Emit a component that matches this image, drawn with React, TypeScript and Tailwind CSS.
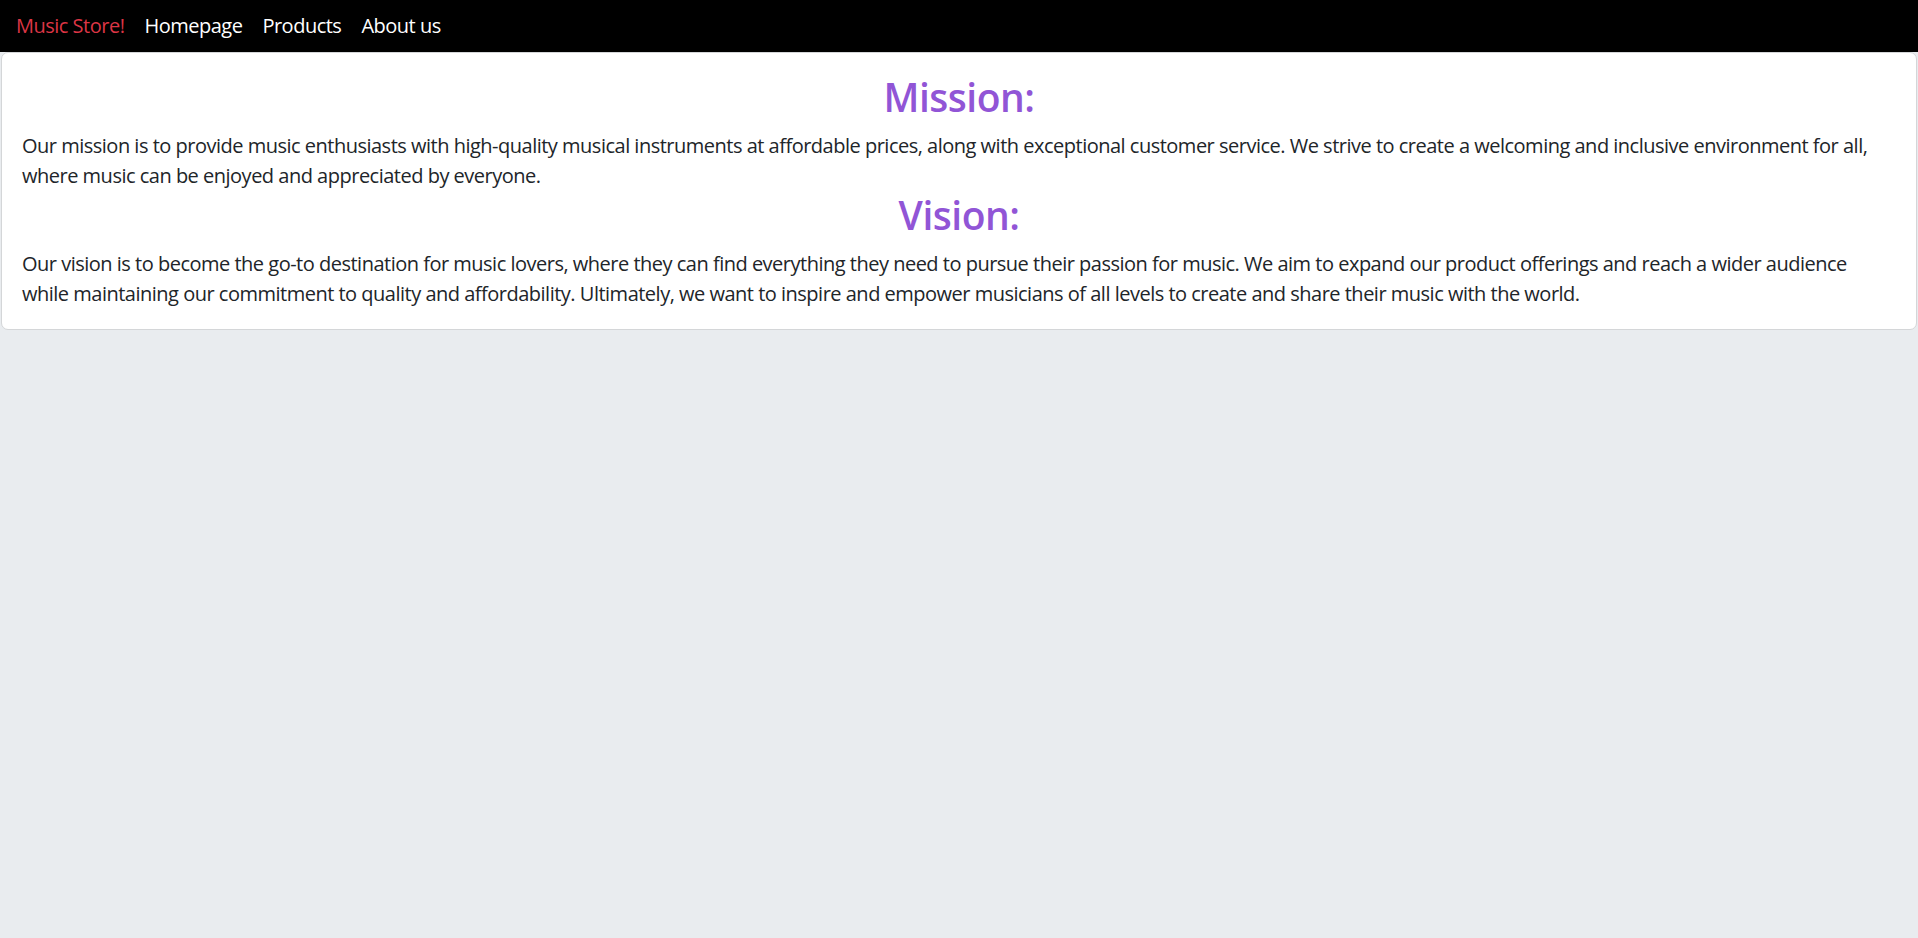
const NAV_LINKS = ["Homepage", "Products", "About us"];

const SECTIONS = [
  {
    title: "Mission:",
    body:
      "Our mission is to provide music enthusiasts with high-quality musical instruments at affordable prices, along with exceptional customer service. We strive to create a welcoming and inclusive environment for all, where music can be enjoyed and appreciated by everyone.",
  },
  {
    title: "Vision:",
    body:
      "Our vision is to become the go-to destination for music lovers, where they can find everything they need to pursue their passion for music. We aim to expand our product offerings and reach a wider audience while maintaining our commitment to quality and affordability. Ultimately, we want to inspire and empower musicians of all levels to create and share their music with the world.",
  },
];

export default function App() {
  return (
    <div className="min-h-screen bg-[#e9ecef] font-['Open_Sans','Noto_Sans',sans-serif] tracking-[-0.5px] text-[#212529]">
      <nav className="flex h-[52px] items-center bg-black px-[16px]">
        <a className="text-[20px] leading-[30px] text-[#dc3545]">Music Store!</a>
        <ul className="ml-[10px] flex">
          {NAV_LINKS.map((link) => (
            <li key={link}>
              <a className="block px-[10px] text-[20px] leading-[30px] text-white">{link}</a>
            </li>
          ))}
        </ul>
      </nav>

      <main className="mx-[1px]">
        <div className="rounded-[7px] border border-[#d4d6d8] bg-white px-[20px] py-[20px]">
          {SECTIONS.map((section) => (
            <section key={section.title}>
              <h2 className="mb-[10px] text-center text-[39px] font-semibold leading-[48px] text-[#9155d6]">
                {section.title}
              </h2>
              <p className="text-[20px] leading-[30px]">{section.body}</p>
            </section>
          ))}
        </div>
      </main>
    </div>
  );
}
